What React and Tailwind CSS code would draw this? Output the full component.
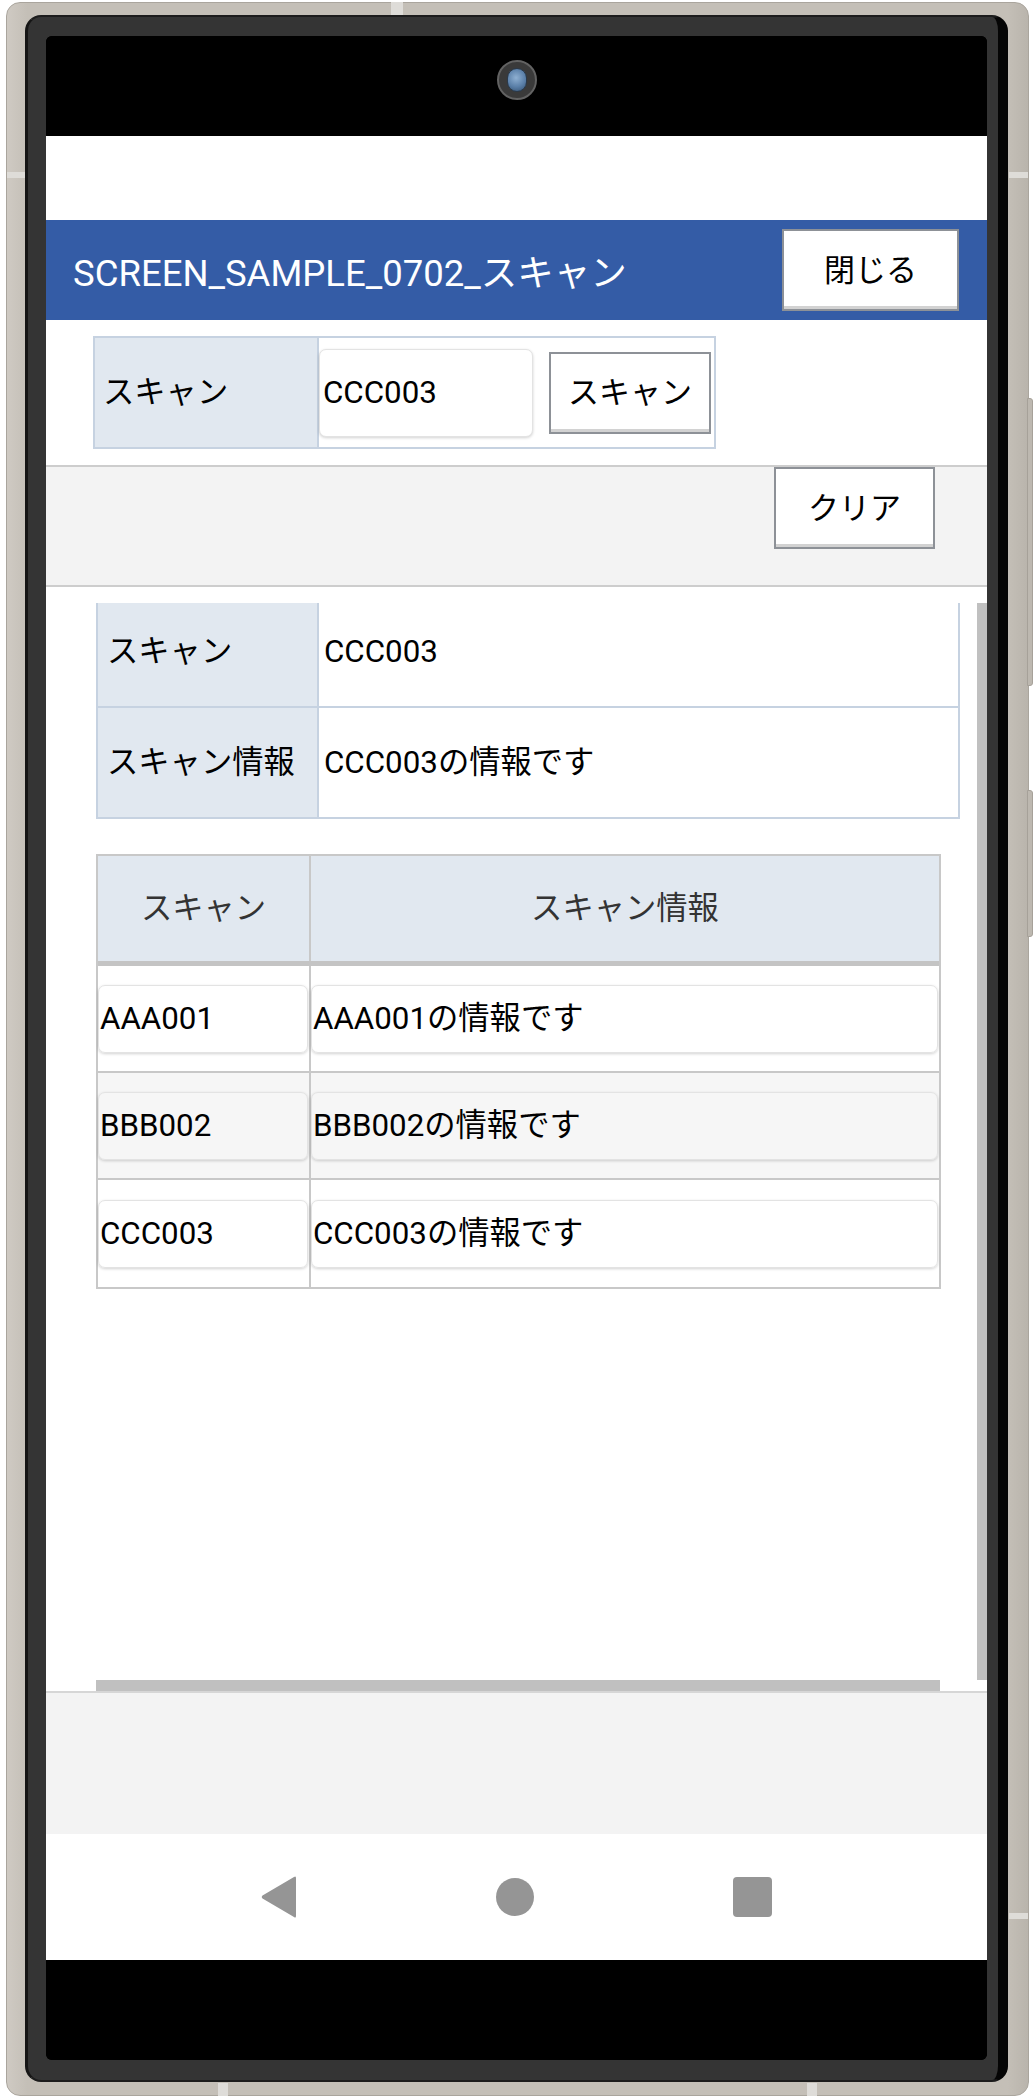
import React from "react";

const rows = [
  { code: "AAA001", info: "AAA001の情報です" },
  { code: "BBB002", info: "BBB002の情報です" },
  { code: "CCC003", info: "CCC003の情報です" },
];

function FrameButton({ children, className }) {
  return (
    <button
      type="button"
      className={`flex items-center justify-center bg-white border-2 border-[#8d9197] shadow-[inset_0_-3px_0_#d2d2d2] text-[31px] leading-none text-black ${className}`}
    >
      {children}
    </button>
  );
}

function Field({ children, className }) {
  return (
    <div
      className={`flex items-center rounded-[7px] border border-[#e3e3e3] shadow-[0_1px_3px_rgba(0,0,0,0.18)] text-[31.3px] leading-none text-black ${className}`}
    >
      {children}
    </div>
  );
}

function NavBar() {
  return (
    <div className="h-[126px] bg-white flex items-center justify-center gap-[199px]">
      <svg width="36" height="42" viewBox="0 0 36 42">
        <path
          d="M35 2 V40 Q35 42.5 33 41 L1.5 22.6 Q0 21 1.5 19.4 L33 1 Q35 -0.5 35 2 Z"
          fill="#959595"
        />
      </svg>
      <div className="w-[38px] h-[38px] rounded-full bg-[#959595]" />
      <div className="w-[39px] h-[40px] rounded-[4px] bg-[#959595]" />
    </div>
  );
}

export default function App() {
  return (
    <div className="relative w-[1035px] h-[2099px] bg-white pt-[2px] pl-[6px] font-['Roboto','Noto_Sans_CJK_JP',sans-serif]">
      {/* device body */}
      <div className="w-[1023px] h-[2094px] rounded-[14px] bg-[linear-gradient(to_right,#cfcac3_0%,#c4bfb7_2%,#c4bfb7_98%,#b9b4ac_100%)] border border-[#aaa59d] pt-[12px] pl-[18px]">
        {/* bezel */}
        <div className="w-[983px] h-[2067px] rounded-[16px] bg-[#343434] border-t-2 border-b-2 border-l-[3px] border-r-[10px] border-t-[#1c1c1c] border-b-[#1c1c1c] border-l-[#151515] border-r-[#050505] pt-[19px] pl-[18px]">
          {/* screen */}
          <div className="w-[941px] h-[2024px] rounded-[6px] bg-black overflow-hidden flex flex-col">
            {/* camera strip */}
            <div className="h-[100px] shrink-0 bg-black flex justify-center pt-[24px]">
              <div className="w-[40px] h-[40px] rounded-full bg-[#3a3a3a] border-2 border-[#626262] flex items-center justify-center">
                <div className="w-[20px] h-[24px] rounded-full bg-[radial-gradient(circle_at_45%_40%,#8fb0d2_0%,#5a7fa8_55%,#34506f_100%)] border border-[#2a3a4c]" />
              </div>
            </div>

            {/* status area */}
            <div className="h-[84px] shrink-0 bg-white" />

            {/* title bar */}
            <div className="h-[100px] shrink-0 bg-[#345ca6] flex items-center justify-between pl-[27px] pr-[28px]">
              <span className="text-[36.5px] leading-none text-white pt-[9px]">SCREEN_SAMPLE_0702_スキャン</span>
              <FrameButton className="w-[177px] h-[82px]">閉じる</FrameButton>
            </div>

            {/* scan input row */}
            <div className="h-[145px] shrink-0 bg-white pt-[16px] pl-[47px]">
              <div className="w-[623px] h-[113px] border-2 border-[#c6d2e1] flex">
                <div className="w-[224px] bg-[#e1e8f0] border-r-2 border-[#c6d2e1] flex items-center pl-[8px] text-[31.3px] leading-none text-black">
                  スキャン
                </div>
                <div className="flex items-center gap-[16px]">
                  <Field className="w-[214px] h-[88px] bg-white pl-[3px]">CCC003</Field>
                  <FrameButton className="w-[162px] h-[82px]">スキャン</FrameButton>
                </div>
              </div>
            </div>

            {/* action band */}
            <div className="h-[122px] shrink-0 bg-[#f3f3f3] border-t-2 border-b-2 border-[#cdcdcd] flex justify-end items-start pr-[52px]">
              <FrameButton className="w-[161px] h-[82px]">クリア</FrameButton>
            </div>

            {/* scrolling body */}
            <div className="h-[1104px] shrink-0 bg-white pt-[16px] pl-[50px]">
              <div className="w-[891px] flex flex-col">
                <div className="flex">
                  <div className="w-[881px] h-[1077px] overflow-hidden">
                    <div className="-mt-[8px]">
                      {/* detail */}
                      <div className="w-[864px] border-2 border-[#c6d2e1]">
                        <div className="flex h-[111px] border-b-2 border-[#c6d2e1]">
                          <div className="w-[221px] bg-[#e1e8f0] border-r-2 border-[#c6d2e1] flex items-center pl-[9px] text-[31.3px] leading-none text-black">
                            スキャン
                          </div>
                          <div className="flex-1 flex items-center pl-[5px] text-[31.3px] leading-none text-black">CCC003</div>
                        </div>
                        <div className="flex h-[109px]">
                          <div className="w-[221px] bg-[#e1e8f0] border-r-2 border-[#c6d2e1] flex items-center pl-[9px] text-[31.3px] leading-none text-black">
                            スキャン情報
                          </div>
                          <div className="flex-1 flex items-center pl-[5px] text-[31.3px] leading-none text-black">
                            CCC003の情報です
                          </div>
                        </div>
                      </div>

                      {/* list */}
                      <div className="mt-[35px] w-[845px] border-2 border-[#c8c8c8]">
                        <div className="flex h-[110px] bg-[#e1e8f0] border-b-[5px] border-[#c4c4c4]">
                          <div className="w-[213px] border-r-2 border-[#c8c8c8] flex items-center justify-center text-[31.3px] leading-none text-[#333333]">
                            スキャン
                          </div>
                          <div className="flex-1 flex items-center justify-center text-[31.3px] leading-none text-[#333333]">
                            スキャン情報
                          </div>
                        </div>
                        {rows.map((r, i) => (
                          <div
                            key={r.code}
                            className={`flex h-[107px] ${i < rows.length - 1 ? "border-b-2 border-[#c8c8c8]" : "h-[105px]"} ${i === 1 ? "bg-[#f6f6f6]" : "bg-white"}`}
                          >
                            <div className="w-[213px] border-r-2 border-[#c8c8c8] flex items-center">
                              <Field className="w-[210px] h-[68px] pl-[1px]">{r.code}</Field>
                            </div>
                            <div className="flex-1 flex items-center">
                              <Field className="w-[627px] h-[68px] pl-[1px]">{r.info}</Field>
                            </div>
                          </div>
                        ))}
                      </div>
                    </div>
                  </div>
                  <div className="w-[10px] h-[1077px] bg-[#c0c0c0]" />
                </div>
                <div className="w-[844px] h-[11px] bg-[#c0c0c0]" />
              </div>
            </div>

            {/* footer band */}
            <div className="h-[143px] shrink-0 bg-[#f3f3f3] border-t-2 border-[#d6d6d6]" />

            <NavBar />

            <div className="h-[100px] shrink-0 bg-black" />
          </div>
        </div>
      </div>

      {/* frame seams and side keys */}
      <div className="absolute left-[391px] top-[2px] w-[12px] h-[13px] bg-[#dedcd8]" />
      <div className="absolute left-[218px] top-[2083px] w-[10px] h-[13px] bg-[#dedcd8]" />
      <div className="absolute left-[807px] top-[2083px] w-[10px] h-[13px] bg-[#dedcd8]" />
      <div className="absolute left-[7px] top-[172px] w-[18px] h-[6px] bg-[#dedcd8]" />
      <div className="absolute left-[1009px] top-[172px] w-[19px] h-[6px] bg-[#dedcd8]" />
      <div className="absolute left-[1009px] top-[1913px] w-[19px] h-[6px] bg-[#dedcd8]" />
      <div className="absolute left-[1027px] top-[398px] w-[6px] h-[288px] rounded-r-[3px] bg-[#bdb8b0] border border-[#a6a199]" />
      <div className="absolute left-[1027px] top-[790px] w-[6px] h-[147px] rounded-r-[3px] bg-[#bdb8b0] border border-[#a6a199]" />
    </div>
  );
}
